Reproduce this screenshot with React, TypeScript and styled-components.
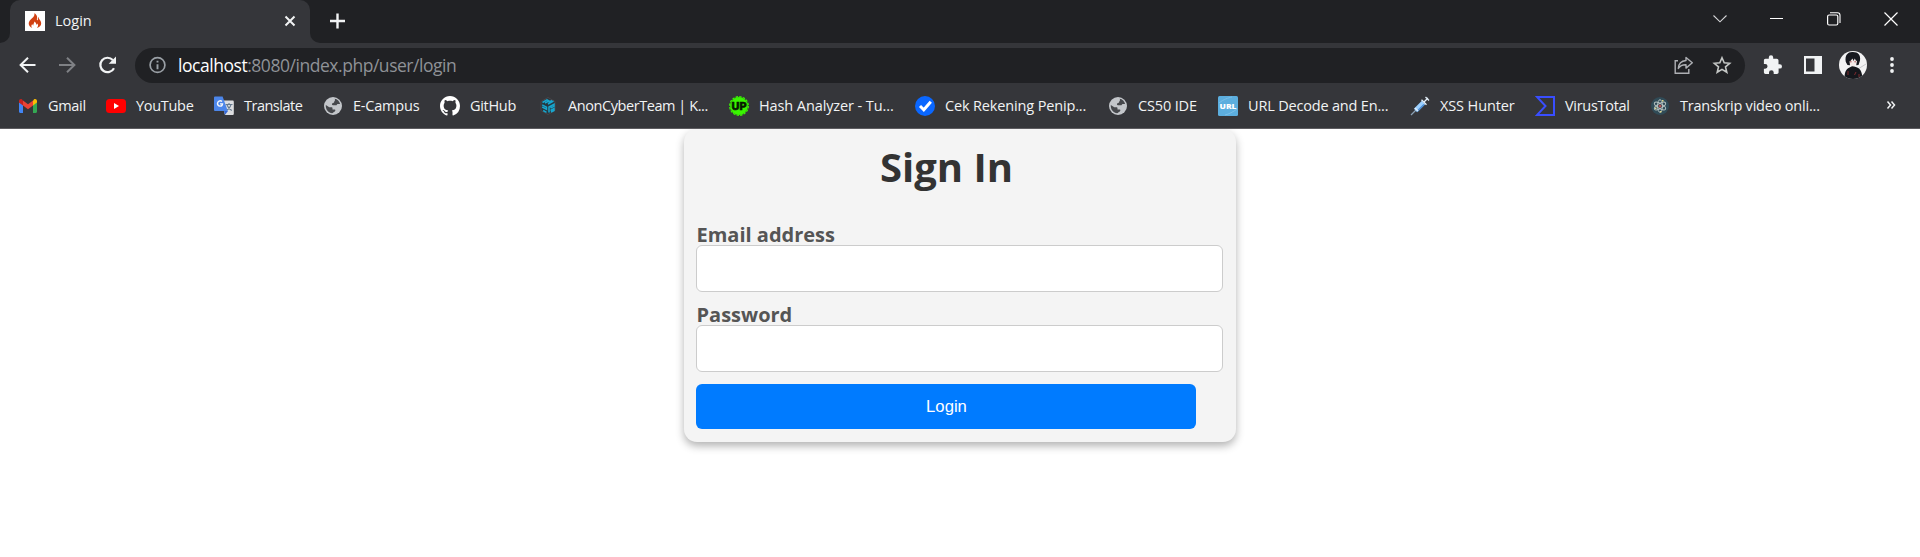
import React from "react";
import styled, { createGlobalStyle } from "styled-components";

const GlobalStyle = createGlobalStyle`
  * { box-sizing: border-box; }
  html, body { margin: 0; padding: 0; background: #fff; }
  body { overflow: hidden; font-family: "Open Sans", "Noto Sans", sans-serif; }
`;

const Window = styled.div`
  width: 1920px;
  height: 557px;
  display: flex;
  flex-direction: column;
  overflow: hidden;
`;

/* Tab strip */
const TabStrip = styled.div`
  display: flex;
  height: 43px;
  flex: none;
  background: #35363a;
`;
const StripStart = styled.div`
  width: 10px;
  background: #202124;
  border-bottom-right-radius: 10px;
`;
const TabSlot = styled.div`
  width: 300px;
  background: #202124;
`;
const Tab = styled.div`
  height: 43px;
  display: flex;
  align-items: flex-start;
  padding: 11px 14px 0 15px;
  background: #35363a;
  border-radius: 10px 10px 0 0;
`;
const TabTitle = styled.span`
  flex: 1;
  margin-left: 10px;
  font-size: 14.5px;
  letter-spacing: 0;
  line-height: 20px;
  color: #f1f3f4;
`;
const TabClose = styled.span`
  display: flex;
  align-items: center;
  height: 20px;
`;
const StripRest = styled.div`
  flex: 1;
  display: flex;
  justify-content: space-between;
  padding: 12px 22px 0 19px;
  background: #202124;
  border-bottom-left-radius: 10px;
`;
const WindowButtons = styled.div`
  display: flex;
  gap: 43px;
  height: 14px;
`;

/* Toolbar */
const Toolbar = styled.div`
  display: flex;
  align-items: center;
  flex: none;
  height: 44px;
  padding: 0 17px 0 17px;
  background: #35363a;
`;
const NavButtons = styled.div`
  display: flex;
  gap: 20px;
  width: 118px;
`;
const AddressBar = styled.div`
  display: flex;
  align-items: center;
  width: 1610px;
  height: 35px;
  padding: 0 13px 0 13px;
  border-radius: 18px;
  background: #202124;
`;
const Url = styled.span`
  flex: 1;
  margin-left: 10px;
  font-size: 17.5px;
  letter-spacing: -0.46px;
  line-height: 24px;
  white-space: nowrap;
  color: #8f9297;
`;
const Host = styled.span`
  color: #fff;
`;
const AddressActions = styled.div`
  display: flex;
  gap: 19px;
`;
const ToolbarActions = styled.div`
  display: flex;
  align-items: center;
  flex: 1;
  padding-left: 18px;
`;
const ActionSlot = styled.div<{ $w: number }>`
  display: flex;
  width: ${(p) => p.$w}px;
`;

/* Bookmarks */
const BookmarkBar = styled.div`
  display: flex;
  align-items: center;
  flex: none;
  height: 42px;
  padding: 0 22px 4px 18px;
  background: #35363a;
  border-bottom: 1px solid #5d5c60;
`;
const Bookmark = styled.div<{ $w: number }>`
  display: flex;
  align-items: center;
  flex: none;
  gap: 10px;
  width: ${(p) => p.$w}px;
  height: 20px;
`;
const BookmarkLabel = styled.span<{ $tracking: number }>`
  font-size: 14.5px;
  line-height: 20px;
  letter-spacing: ${(p) => p.$tracking}px;
  white-space: nowrap;
  color: #f1f3f4;
`;

const Overflow = styled.div`
  display: flex;
  flex: 1;
  justify-content: flex-end;
  padding: 0 2px 2px 0;
`;

/* Page */
const Page = styled.main`
  flex: 1;
  overflow: hidden;
  background: #fff;
`;
const Card = styled.form`
  width: 552px;
  height: 313px;
  margin: 0 auto;
  padding: 11px 13px 0 12px;
  border-radius: 13px;
  background: #f4f4f4;
  box-shadow: 0 4px 8px rgba(0, 0, 0, 0.3);
`;
const Title = styled.h1`
  width: 501px;
  margin: 0 0 35px;
  text-align: center;
  font-size: 40px;
  line-height: 54px;
  font-weight: 700;
  color: #333;
`;
const Field = styled.label`
  display: block;
  height: 80px;
  font-size: 20px;
  line-height: 12px;
  font-weight: 700;
  color: #555;
`;
const FieldName = styled.span`
  display: block;
  height: 16px;
  padding-left: 0.5px;
`;
const Input = styled.input`
  display: block;
  width: 527px;
  height: 47px;
  padding: 12px;
  border: 1px solid #ccc;
  border-radius: 6px;
  background: #fff;
  font-size: 16.67px;
`;
const Submit = styled.button`
  display: block;
  width: 500px;
  height: 45px;
  margin-top: -5px;
  padding: 0 0 0 1px;
  border: 0;
  border-radius: 6px;
  background: #007bff;
  color: #fff;
  font: 16.67px "Liberation Sans", Arial, sans-serif;
`;

const Svg = ({ s = 20, vb = 20, children }: { s?: number; vb?: number; children: React.ReactNode }) => (
  <svg width={s} height={s} viewBox={`0 0 ${vb} ${vb}`} fill="none" flexShrink="0">
    {children}
  </svg>
);

const Flame = () => (
  <Svg>
    <path fill="#fff" d="M0 0h20v20H0z" />
    <path
      fill="#d14112"
      d="M9.300 2.200c.6 2.200-.6 3.400-2.300 5.100C5.200 9 3.600 10.500 3.700 12.800c.1 1.900 1.500 3.500 3.600 4.200-1.300-1.300-1.200-2.900 0-4 .1.900.5 1.300 1.100 1.500-.4-1.500 1.100-2.300.9-3.900 1.500.8 2.200 1.900 1.800 3.100.7-.1 1-.5 1-1.100 1.500 1.400 1.300 3-.3 4.400 2.700-.6 4.400-2.500 4.400-4.800 0-2-1.300-3.200-2.200-4.500-.3-.6-.4-1.100-.2-1.800-.9.500-1.100 1.500-.9 2.500.1.700-.5 1-.9.500-.4-.7.300-1.600.1-3.100-.2-1.700-1.300-3-2.800-3.600z"
    />
  </Svg>
);
const Gmail = () => (
  <Svg>
    <path fill="#4285f4" d="M1 6v9.600c0 .8.500 1.300 1.200 1.300H5V9z" />
    <path fill="#34a853" d="M15 9v7.900h2.800c.7 0 1.200-.6 1.200-1.300V6z" />
    <path fill="#fbbc04" d="M15 4.700V9.500l4-3V4.900c0-1.700-1.900-2.500-3.100-1.500z" />
    <path fill="#ea4335" d="M5 9.500V4.500l5 3.800 5-3.800v5l-5 3.700z" />
    <path fill="#c5221f" d="M1 4.900v1.600l4 3V4.500L4.100 3.500C2.800 2.500 1 3.300 1 4.900z" />
  </Svg>
);
const YouTube = () => (
  <Svg>
    <rect y="3" width="20" height="14" rx="3.500" fill="#f00" />
    <path fill="#fff" d="M8 7v6l5-3z" />
  </Svg>
);
const Translate = () => (
  <Svg>
    <path fill="#dcdde0" d="M7 4.500h11.500c.8 0 1.300.5 1.300 1.300v12c0 .8-.5 1.300-1.300 1.300H11z" />
    <path fill="#3367d6" d="m10 15 4-.1-3.100 4z" />
    <path stroke="#64798d" strokeWidth="1.100" d="M11.500 8.500h7M15 7v1.500m2 0c-.5 2.500-2.100 4.500-4.500 6M13 9c1 2.500 2.500 4.200 4.800 5.500" />
    <path fill="#4c86ea" d="M1.300.5h7.300l5.200 14.500H1.300C.5 15 0 14.500 0 13.700V1.800C0 1 .5.500 1.300.5z" />
    <path stroke="#f3f6fb" strokeWidth="1.400" d="M8 5.500C6.200 4 3.500 5.200 3.500 7.600c0 3 4.600 3.700 5 .3H6" />
  </Svg>
);
const Globe = () => (
  <Svg>
    <circle cx="10" cy="10" r="9" fill="#c3c6ca" />
    <path
      fill="#46484c"
      d="M11.500 2.700c2.800.3 5.200 2.700 5.600 5.300h-2c-.7 0-1.200.6-1.600 1.200H10c-1.100 0-1.500-1.400-.5-1.900l1.200-.6c.7-.4.4-1.200.8-1.700.9-.7.6-1.700 0-2.300zM2.800 9l3.500 2.200h2c1 0 1.200.5 1.200 1.400v.8h2c.7 0 .9.500.9 1.200l-.9 1.100c-.5.600-1.300.4-1.700 1.400-3.800.4-7.400-3-7-8.100z"
    />
  </Svg>
);
const GitHub = () => (
  <Svg vb={16}>
    <path
      fill="#fff"
      d="M8 0C3.580 0 0 3.580 0 8c0 3.540 2.290 6.530 5.470 7.590.4.070.55-.17.55-.38 0-.19-.01-.82-.01-1.490-2.010.37-2.530-.49-2.690-.94-.09-.23-.48-.94-.82-1.130-.28-.15-.68-.52-.01-.53.63-.01 1.080.58 1.230.82.72 1.210 1.870.87 2.330.66.07-.52.28-.87.51-1.070-1.780-.2-3.640-.89-3.640-3.950 0-.87.31-1.590.82-2.150-.08-.2-.36-1.020.08-2.120 0 0 .67-.21 2.200.82.64-.18 1.320-.27 2-.27s1.360.09 2 .27c1.530-1.040 2.200-.82 2.200-.82.44 1.100.16 1.920.08 2.120.51.56.82 1.270.82 2.150 0 3.070-1.870 3.750-3.650 3.950.29.25.54.73.54 1.480 0 1.070-.01 1.930-.01 2.200 0 .21.15.46.55.38A8.010 8.010 0 0 0 16 8c0-4.420-3.580-8-8-8z"
    />
  </Svg>
);
const Cube = () => (
  <Svg>
    <path fill="#253840" stroke="#4c4447" d="m10 1.500 7 4v9l-7 4-7-4v-9z" />
    <path stroke="#18a6ce" strokeWidth="1.500" d="m4.500 6.500 4.500-2.700 2 1.200-4 2m3 1 5.500-3M4.200 8.800l4.300 2.400v2L4.200 11m1 3.500 3.300 1.800M11 16.500V11l5-2.700v2L12.500 12m0 2.500 3.500-2v2l-3 1.500M10.500 6.500l3.500-2" />
  </Svg>
);
const UpBadge = () => (
  <Svg>
    <circle cx="10" cy="10" r="8.900" fill="#39f500" />
    <circle cx="10" cy="10" r="9.300" stroke="#39f500" strokeWidth="1.300" strokeDasharray="2.400 1.250" />
    <text x="10" y="14" textAnchor="middle" textLength="15" lengthAdjust="spacingAndGlyphs" fontSize="11" fontWeight="800" fontFamily="Inter, sans-serif" fill="#071800" stroke="#071800" strokeWidth=".6">UP</text>
  </Svg>
);
const CheckBadge = () => (
  <Svg>
    <circle cx="10" cy="10" r="10" fill="#0a67ff" />
    <path stroke="#fff" strokeWidth="3" d="m5 10 3.800 3.700 7-8" />
  </Svg>
);
const UrlBadge = () => (
  <Svg>
    <rect width="20" height="20" rx="1.500" fill="#5caede" />
    <path stroke="#7bbfe8" strokeWidth="1" d="M1 7c5-4 9-5 13-6M7 19c4-1 8-3 12-6" />
    <text x="10" y="12.700" textAnchor="middle" textLength="17" lengthAdjust="spacingAndGlyphs" fontSize="7.500" fontWeight="800" fontFamily="Open Sans, sans-serif" fill="#fff">URL</text>
  </Svg>
);
const Syringe = () => (
  <Svg>
    <path stroke="#8ba1b5" strokeWidth="1.200" d="m1 19 5-5" />
    <path stroke="#9bd0ff" strokeWidth="4.600" d="m5.500 14.500 8-8" />
    <path stroke="#4d8dd4" strokeWidth="1.600" d="m7 15.500 7-7" />
    <path stroke="#e4f0fa" strokeWidth="1.300" d="m11.500 3.800 5 5M14 6l4-4M15.500 1l3.500 3.500M5 12l3 3" />
  </Svg>
);
const VirusTotal = () => (
  <Svg>
    <path stroke="#394eff" strokeWidth="2" d="M2 1h17v18H2l8.500-9z" />
  </Svg>
);
const Atom = () => (
  <Svg>
    <circle cx="10" cy="10" r="9" fill="#304b57" />
    <g stroke="#b4c1c0" strokeWidth="1">
      <ellipse cx="10" cy="10" rx="2.500" ry="6.300" />
      <ellipse cx="10" cy="10" rx="2.500" ry="6.300" transform="rotate(60 10 10)" />
      <ellipse cx="10" cy="10" rx="2.500" ry="6.300" transform="rotate(120 10 10)" />
    </g>
    <circle cx="10" cy="10" r="1.500" fill="#b75353" />
    <path fill="#dfd98b" d="M12 4h1.500v1.500H12zM5 11.500h1.500V13H5zM10 15h1.500v1.500H10z" />
  </Svg>
);
const Avatar = () => (
  <Svg s={28} vb={28}>
    <clipPath id="face"><circle cx="14" cy="14" r="14" /></clipPath>
    <g clipPath="url(#face)">
      <path fill="#f3f3f4" d="M0 0h28v28H0z" />
      <path stroke="#c9c9cc" d="m19 18 8-5" />
      <path fill="#15171c" d="M5.500 28c0-6 .8-9.500 5-11.500l3-1.500 4 1.200c5 1.500 5.500 6.300 6 11.800z" />
      <path fill="#f4e9e7" d="M9.500 7h8.500v5.500L14 15.500 10 13z" />
      <path fill="#17191f" d="M6.800 11C5.500 4 9 .8 13.500 1 19 .8 22 4 21 9.500l-1.500 4.500-2.300.3.800-4.200-1.200-.5-1-2.200-1.300 2.700-1-2.500-2 2.300-1 .3.500 4.100-2.500-.3z" />
      <path stroke="#9c3034" strokeWidth=".8" d="M11 10.800h1.600m2.800 0h1.600M9 20v4m8-3-1.500 3m4.500-1v3" />
    </g>
  </Svg>
);

const Back = () => (
  <Svg><path stroke="#f1f3f4" strokeWidth="2" d="M18.500 10H4m7-7.200L3.600 10l7.400 7.200" /></Svg>
);
const Forward = () => (
  <Svg><path stroke="#7f8185" strokeWidth="2" d="M2 10h15M10 2.800l7.400 7.200L10 17.200" /></Svg>
);
const Reload = () => (
  <Svg>
    <path stroke="#f1f3f4" strokeWidth="2.200" d="M17 13.200A7.200 7.200 0 1 1 15.800 5" />
    <path fill="#f1f3f4" d="M19 1.500v7.300h-7.300z" />
  </Svg>
);
const Info = () => (
  <Svg>
    <circle cx="9.500" cy="10" r="7.400" stroke="#9aa0a6" strokeWidth="1.700" />
    <path stroke="#9aa0a6" strokeWidth="1.900" d="M9.500 9.200v5M9.500 5.700v1.900" />
  </Svg>
);
const Share = () => (
  <Svg>
    <path stroke="#aeb0b4" strokeWidth="1.400" d="M5 5.700H2.200v12.600h13.600V14" />
    <path stroke="#aeb0b4" strokeWidth="1.400" strokeLinejoin="round" d="M13 2.500 19.300 7.800 13 13.100V9.800c-3.500-.1-6 1-7.700 3.700.3-4.600 3-7.600 7.700-8z" />
  </Svg>
);
const Star = () => (
  <Svg>
    <path stroke="#c4c7c5" strokeWidth="1.600" d="m10 2.800 2.200 5 5.500.5-4.200 3.600 1.300 5.400-4.800-2.900-4.800 2.900 1.300-5.400-4.200-3.600 5.500-.5z" />
  </Svg>
);
const Puzzle = () => (
  <Svg>
    <path fill="#f1f3f4" d="M16.800 9.200h-1.300V5.500c0-1-.8-1.700-1.700-1.700h-3.600V2.500a2.200 2.200 0 0 0-4.400 0v1.300H2.500C1.500 3.800.9 4.500.9 5.500V9h1.300a2.300 2.300 0 0 1 0 4.700H.9v3.500c0 1 .7 1.700 1.600 1.700H6v-1.300a2.300 2.300 0 0 1 4.700 0v1.300h3.200c.9 0 1.700-.7 1.700-1.700v-3.600h1.200a2.200 2.200 0 0 0 0-4.400z" />
  </Svg>
);
const Panel = () => (
  <Svg><path fill="#f1f3f4" fillRule="evenodd" d="M1 1h18v18H1zM3 3.500v13h8.500v-13z" /></Svg>
);
const Dots = () => (
  <Svg>
    <circle cx="10" cy="4" r="1.900" fill="#f1f3f4" />
    <circle cx="10" cy="10" r="1.900" fill="#f1f3f4" />
    <circle cx="10" cy="16" r="1.900" fill="#f1f3f4" />
  </Svg>
);
const Chevrons = () => (
  <Svg s={10} vb={10}><path stroke="#f1f3f4" strokeWidth="1.500" d="m1.500 1.500 3 3.500-3 3.500M5.500 1.500l3 3.500-3 3.500" /></Svg>
);

const bookmarks: [string, number, number, React.FC][] = [
  ["Gmail", 88, -0.3, Gmail],
  ["YouTube", 108, -0.3, YouTube],
  ["Translate", 109, -0.5, Translate],
  ["E-Campus", 117, -0.2, Globe],
  ["GitHub", 98, -0.3, GitHub],
  ["AnonCyberTeam | K...", 191, -0.43, Cube],
  ["Hash Analyzer - Tu...", 186, -0.1, UpBadge],
  ["Cek Rekening Penip...", 193, -0.15, CheckBadge],
  ["CS50 IDE", 110, -0.15, Globe],
  ["URL Decode and En...", 192, -0.18, UrlBadge],
  ["XSS Hunter", 125, -0.12, Syringe],
  ["VirusTotal", 115, -0.3, VirusTotal],
  ["Transkrip video onli...", 180, -0.2, Atom],
];

export default function App() {
  return (
    <Window>
      <GlobalStyle />
      <TabStrip>
        <StripStart />
        <TabSlot>
          <Tab>
            <Flame />
            <TabTitle>Login</TabTitle>
            <TabClose>
              <Svg s={12} vb={12}><path stroke="#f1f3f4" strokeWidth="2" d="m1.500 1.500 9 9M10.500 1.500l-9 9" /></Svg>
            </TabClose>
          </Tab>
        </TabSlot>
        <StripRest>
          <Svg s={17} vb={17}><path stroke="#f1f3f4" strokeWidth="2.400" d="M8.500 1.500v15M1 9h15" /></Svg>
          <WindowButtons>
            <Svg s={14} vb={14}><path stroke="#d5d6d8" strokeWidth="1.100" d="m.5 3.500 6.500 6.300 6.500-6.300" /></Svg>
            <Svg s={14} vb={14}><path stroke="#fff" d="M0 6.500h13" /></Svg>
            <Svg s={14} vb={14}><rect x=".6" y="3" width="10.200" height="10" rx="1.500" stroke="#fff" strokeWidth="1.200" /><path stroke="#fff" strokeWidth="1.100" d="M3 .7h7.500c1.500 0 2.500 1 2.500 2.500V11" /></Svg>
            <Svg s={14} vb={14}><path stroke="#fff" strokeWidth="1.200" d="m.5.500 13 13M13.500.500l-13 13" /></Svg>
          </WindowButtons>
        </StripRest>
      </TabStrip>
      <Toolbar>
        <NavButtons><Back /><Forward /><Reload /></NavButtons>
        <AddressBar>
          <Info />
          <Url><Host>localhost</Host>:8080/index.php/user/login</Url>
          <AddressActions><Share /><Star /></AddressActions>
        </AddressBar>
        <ToolbarActions>
          <ActionSlot $w={40}><Puzzle /></ActionSlot>
          <ActionSlot $w={36}><Panel /></ActionSlot>
          <ActionSlot $w={43}><Avatar /></ActionSlot>
          <Dots />
        </ToolbarActions>
      </Toolbar>
      <BookmarkBar>
        {bookmarks.map(([name, width, tracking, Icon]) => (
          <Bookmark key={name} $w={width}>
            <Icon />
            <BookmarkLabel $tracking={tracking}>{name}</BookmarkLabel>
          </Bookmark>
        ))}
        <Overflow><Chevrons /></Overflow>
      </BookmarkBar>
      <Page>
        <Card onSubmit={(e) => e.preventDefault()}>
          <Title>Sign In</Title>
          <Field><FieldName>Email address</FieldName><Input type="email" /></Field>
          <Field><FieldName>Password</FieldName><Input type="password" /></Field>
          <Submit type="submit">Login</Submit>
        </Card>
      </Page>
    </Window>
  );
}
